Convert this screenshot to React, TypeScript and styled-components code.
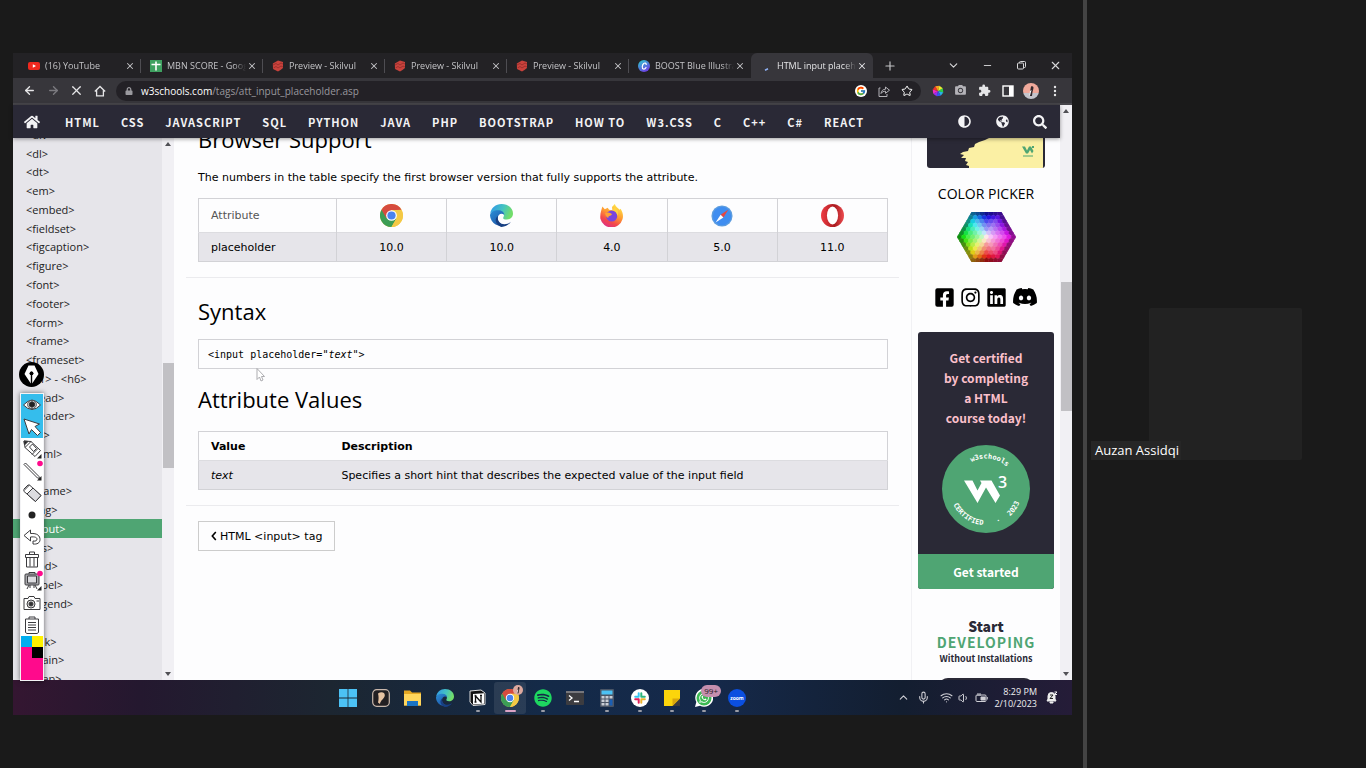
import React from "react";
import styled, { createGlobalStyle, css } from "styled-components";
import { FaHome, FaAdjust, FaGlobeAmericas, FaSearch, FaFacebookSquare, FaInstagram, FaLinkedin, FaDiscord, FaLock, FaSpotify, FaWhatsapp } from "react-icons/fa";
import { FcGoogle } from "react-icons/fc";
import { MdExtension, MdPhotoCamera } from "react-icons/md";
import { ArrowLeft, ArrowRight, X, Plus, ChevronDown, ChevronUp, Minus, Star, Mic, Wifi, Volume1 } from "lucide-react";

const ui = `"Open Sans", "Noto Sans", sans-serif`;
const source = `"Noto Sans CJK SC", "Noto Sans", sans-serif`;
const verdana = `"DejaVu Sans", sans-serif`;
const ink = "#2a2936";
const green = "#4fa573";
const mist = "#e6e5ea";

const GlobalStyle = createGlobalStyle`
  *, *::before, *::after { box-sizing: border-box; }
  body { margin: 0; background: #1a1a1a; font-family: ${ui}; overflow: hidden; }
  button { font: inherit; color: inherit; background: none; border: 0; padding: 0; cursor: pointer; }
  a { color: inherit; text-decoration: none; }
  h2, p, ul { margin: 0; padding: 0; font-weight: 400; }
  svg { display: block; flex: none; }
`;

/* ---------- meeting frame ---------- */
const Meeting = styled.div`display: flex; height: 100vh; background: #1a1a1a;`;
const Shared = styled.main`flex: 1; min-width: 0; display: flex; flex-direction: column; padding: 53px 11px 53px 13px;`;
const Splitter = styled.div`width: 4px; background: #444;`;
const Gallery = styled.aside`width: 279px; padding: 0 6px 0 4px; display: flex; align-items: center;`;
const Participant = styled.div`position: relative; flex: 1; display: flex; justify-content: center;`;
const Avatar = styled.div`width: 153px; height: 152px; background: #222; border-radius: 2px;`;
const NameTag = styled.span`
  position: absolute; left: 0; bottom: 0; padding: 0 2px 0 4px;
  font-size: 13px; line-height: 19px; color: #fff; background: #262626;
`;

/* ---------- browser chrome ---------- */
const TabStrip = styled.div`display: flex; height: 25px; padding-left: 6px; background: #232225; color: #c3c3c6;`;
const Tab = styled.div<{ $active?: boolean; $bare?: boolean }>`
  flex: 0 1 122px; min-width: 0; display: flex; align-items: center; gap: 5px; padding: 0 6px 0 9px;
  font-size: 9px; position: relative;
  ${p => p.$active ? css`background: #37363b; border-radius: 6px 6px 0 0; color: #e4e4e6;` : ""}
  ${p => !p.$active && !p.$bare ? css`&::after { content: ""; position: absolute; right: 0; top: 6px; height: 14px; width: 1px; background: #4e4d52; }` : ""}
`;
const TabTitle = styled.span`
  flex: 1; min-width: 0; margin-right: -4px; overflow: hidden; white-space: nowrap;
  mask-image: linear-gradient(90deg, #000 85%, transparent);
`;
const IconButton = styled.button<{ $w?: number; $dim?: boolean }>`
  width: ${p => p.$w ?? 23}px; flex: none; display: flex; align-items: center; justify-content: center;
  color: ${p => (p.$dim ? "#7c7b80" : "inherit")};
`;
const WindowButtons = styled.div`display: flex; margin-left: auto; color: #d8d8da;`;
const Toolbar = styled.div`
  display: flex; align-items: center; height: 27px; padding: 0 6px 0 5px;
  background: #37363b; border-bottom: 2px solid #47464b; color: #e6e6e8;
`;
const Omnibox = styled.label`
  flex: 1; min-width: 0; height: 20px; margin: 0 5px; padding: 0 3px 0 9px; border-radius: 10px;
  display: flex; align-items: center; background: #232126; font-size: 10px; color: #fff;
  > svg { margin-right: 8px; color: #9a999e; }
`;
const Address = styled.input`
  flex: 1; min-width: 0; border: 0; padding: 0; background: none; outline: 0;
  font: inherit; color: #99989d;
`;
const Profile = styled.span`
  width: 16px; height: 16px; border-radius: 50%; overflow: hidden;
  background: linear-gradient(#f0a99b 60%, #c4c4cc 60%);
`;

/* ---------- page ---------- */
const Page = styled.div`flex: 1; min-height: 0; display: flex; background: #fdfdfe;`;
const Site = styled.div`flex: 1; min-width: 0; display: flex; flex-direction: column;`;
const Nav = styled.nav`
  position: relative; height: 33px; display: flex; align-items: center; gap: 21px; padding: 0 13px 0 11px;
  background: ${ink}; color: #f3f3f5; box-shadow: 0 1px 4px rgba(0,0,0,.4);
  font-family: ${source}; font-size: 11px; line-height: 16px; font-weight: 700; letter-spacing: 1px; white-space: nowrap;
  a:first-child { margin-right: 4px; }
`;
const NavTools = styled.div`display: flex; gap: 24px; margin-left: auto;`;
const Body = styled.div`flex: 1; min-height: 0; display: flex; overflow: hidden;`;
const Sidebar = styled.aside`width: 149px; overflow: hidden; background: ${mist};`;
const TagList = styled.ul`height: calc(100% + 21px); margin-top: -13px; display: flex; flex-direction: column; list-style: none;`;
const TagItem = styled.li<{ $current?: boolean }>`
  flex: 1; display: flex; align-items: center; padding-left: 13px; font-size: 11px;
  color: ${p => (p.$current ? "#fff" : "#222")}; background: ${p => (p.$current ? green : "none")};
`;

const Track = styled.div`width: 12px; display: flex; flex-direction: column; align-items: center; background: #f1f0f4; padding: 4px 0;`;
const Space = styled.i<{ $grow: number }>`flex: ${p => p.$grow} 0 0;`;
const Thumb = styled.i<{ $grow: number }>`flex: ${p => p.$grow} 0 0; width: 11px; background: #c1c0c4;`;
const Tip = styled.i<{ $down?: boolean }>`
  border: 3px solid transparent; border-width: ${p => (p.$down ? "4px 3px 0" : "0 3px 4px")};
  ${p => (p.$down ? "border-top-color" : "border-bottom-color")}: #505055;
`;

const Article = styled.article`flex: 1; min-width: 0; padding: 0 12px; margin-top: -17px; font: 11px/17px ${verdana}; color: #000;`;
const Section = styled.section`padding: 0 11px 0 12px;`;
const Heading = styled.h2`font: 400 22px/36px ${ui};`;
const Intro = styled.p`padding: 12px 0;`;
const Rule = styled.hr`border: 0; height: 1px; margin: 15px 0; background: #ebebee;`;
const Grid = styled.table<{ $lined?: boolean }>`
  width: 100%; border-collapse: collapse; table-layout: fixed; border: 1px solid #d2d2d6; font: inherit;
  th, td { height: 29px; padding: 0 12px; text-align: left; }
  tbody tr { background: ${mist}; border-top: 1px solid #dcdce0; }
  ${p => p.$lined && css`
    th, td { border-right: 1px solid #d2d2d6; text-align: center; }
    th:first-child, td:first-child { width: 20%; text-align: left; font-weight: 400; }
    th:first-child { color: #555; }
    thead th { height: 34px; }
    svg { margin: 0 auto; }
  `}
`;
const ValueHead = styled.th`width: 19%;`;
const Code = styled.pre`
  margin: 10px 0 12px; height: 30px; padding: 0 9px; border: 1px solid #d2d2d6;
  font: 10px/29px "DejaVu Sans Mono", monospace;
`;
const Values = styled.div`margin-top: 14px;`;
const BackLink = styled.a`
  display: inline-flex; align-items: center; gap: 3px; height: 30px; padding: 0 12px; border: 1px solid #ccc; font-size: 11px;
`;

const Rail = styled.aside`width: 149px; padding: 0 6px; display: flex; flex-direction: column; align-items: center; border-left: 1px solid #f1f1f4;`;
const RailTitle = styled.h2`font-size: 14px; line-height: 20px; margin-top: 16px; color: #000;`;
const Picker = styled.a`margin-top: 8px;`;
const Social = styled.div`display: flex; gap: 5px; align-items: center; margin: 22px 0; color: #000;`;
const Certify = styled.section`
  align-self: stretch; flex: none; display: flex; flex-direction: column; align-items: center;
  border-radius: 3px; overflow: hidden; background: ${ink};
  font: 700 12px/20px ${source}; text-align: center; color: #fbc0cb;
  p { padding: 16px 0 17px; font-weight: 700; }
`;
const Start = styled.button`align-self: stretch; height: 35px; margin-top: 21px; background: ${green}; color: #fff;`;
const Spaces = styled.a`
  margin-top: 29px; display: flex; flex-direction: column; align-items: center; white-space: nowrap;
  font: 700 9px/15px ${source}; color: ${ink};
  b { font-size: 14px; line-height: 16px; }
  em { font-size: 14px; line-height: 17px; font-style: normal; letter-spacing: 1px; color: ${green}; }
`;
const Laptop = styled.i`flex: none; width: 96px; height: 20px; margin-top: 12px; border-radius: 10px; background: ${ink};`;

/* ---------- taskbar ---------- */
const Taskbar = styled.footer`
  position: relative; flex: none; height: 35px; display: flex; justify-content: center; align-items: center;
  background: linear-gradient(90deg, #341631 0, #24182f 12%, #1c2631 30%, #142a48 50%, #15294a 66%, #131e30 84%, #251c38 100%);
`;
const Apps = styled.div`display: flex; width: 421px; height: 32px;`;
const App32 = styled.button<{ $state?: "open" | "focus" }>`
  flex: 1; position: relative; display: flex; align-items: center; justify-content: center; border-radius: 3px;
  background: ${p => (p.$state === "focus" ? "rgba(255,255,255,.09)" : "none")};
  &::after {
    content: ""; position: absolute; bottom: 2px; height: 2px; border-radius: 1px;
    width: ${p => (p.$state === "focus" ? 11 : p.$state ? 4 : 0)}px;
    background: ${p => (p.$state === "focus" ? "#dba3c6" : "#9a9ca6")};
  }
`;
const Count = styled.span`
  position: absolute; left: 13px; top: 3px; padding: 0 3px; border-radius: 6px; background: #c58fae;
  color: #221722; font-size: 8px; line-height: 12px;
`;
const Face = styled.span`position: absolute; right: 3px; top: 3px; width: 10px; height: 10px; border-radius: 50%; background: #dda99f; overflow: hidden;`;
const Tray = styled.div`
  position: absolute; right: 14px; top: 0; height: 35px; display: flex; align-items: center; gap: 5px; color: #d0d0d6;
`;
const TrayGroup = styled.span`display: flex; gap: 7px; margin-right: 5px;`;
const Clock = styled.time`margin: 0 4px 0 1px; font-size: 9px; line-height: 12px; text-align: right; color: #f0f0f2;`;

/* ---------- annotation toolbox ---------- */
const Toolbox = styled.div`
  position: absolute; left: 20px; top: 393px; width: 24px; border: 1px solid #f4f4f6; background: #fff;
  box-shadow: 0 0 5px rgba(0,0,0,.55); display: flex; flex-direction: column;
`;
const Pen = styled.button`position: absolute; left: 19px; top: 362px;`;
const Tool = styled.button<{ $on?: boolean }>`
  height: 22px; position: relative; display: flex; align-items: center; justify-content: center;
  background: ${p => (p.$on ? "#35bdec" : "#fff")};
`;
const Swatches = styled.div`
  display: grid; grid-template-columns: 1fr 1fr; grid-auto-rows: 11px; height: 44px; background: #ff0a8c;
`;
const Swatch = styled.button<{ $c: string }>`background: ${p => p.$c};`;
const Pointer = styled.svg`position: absolute; left: 256px; top: 367px;`;

/* ---------- drawings ---------- */
const ChromeIcon = ({ s = 23 }: { s?: number }) => (
  <svg width={s} height={s} viewBox="0 0 24 24">
    <circle cx="12" cy="12" r="12" fill="#f4c945" />
    <path d="M12 12 1.6 6A12 12 0 0 0 12 24L17.2 15z" fill="#3c9d55" />
    <path d="M1.6 6A12 12 0 0 1 22.4 6L12 6.5 6.8 15z" fill="#d64b3f" />
    <path d="M22.4 6.2H12v5L17 15 12 24A12 12 0 0 0 22.4 6.2z" fill="#f4c945" />
    <circle cx="12" cy="12" r="5.6" fill="#fff" /><circle cx="12" cy="12" r="4.3" fill="#4a82ee" />
  </svg>
);
const EdgeIcon = ({ s = 23, id }: { s?: number; id: string }) => (
  <svg width={s} height={s} viewBox="0 0 24 24">
    <defs>
      <linearGradient id={id + "a"} x1="0" y1="0" x2="1" y2="0.3"><stop offset="0.2" stopColor="#36a4de" /><stop offset="0.6" stopColor="#45c4c0" /><stop offset="1" stopColor="#72dd6a" /></linearGradient>
      <linearGradient id={id + "b"} x1="0" y1="0" x2="0.8" y2="1"><stop offset="0" stopColor="#2b8fd8" /><stop offset="1" stopColor="#1c4fa0" /></linearGradient>
    </defs>
    <path d="M0.3 10C1 4 6 0 12 0c7 0 12 4.500 12 10 0 4-3 6.300-6.500 6.300-3 0-4.200-1.200-3.600-2.300C16 10 13 7.500 9 7.500 5 7.500 1.200 9 0.300 10z" fill={`url(#${id}a)`} />
    <path d="M0 12c0-3.600 4-5.600 8.500-5.600 3.500 0 6.400 2 6.400 5C12 8.500 8 11 8 15c0 4 4 7.500 9 7A12 12 0 0 1 0 12z" fill={`url(#${id}b)`} />
    <path d="M8.600 12.200C7 16 9.500 21 15 21c3 0 5.500-1.300 6.800-2.600C19.500 22 16 24 12 24 8 23 5.500 19 6 16c.3-1.800 1.300-3 2.600-3.800z" fill="#173f82" />
  </svg>
);
const FirefoxIcon = () => (
  <svg width="23" height="23" viewBox="0 0 24 24">
    <defs><linearGradient id="fx" x1="0.8" y1="0" x2="0.3" y2="1"><stop offset="0" stopColor="#fff04a" /><stop offset="0.45" stopColor="#ff9a32" /><stop offset="0.75" stopColor="#f4484a" /><stop offset="1" stopColor="#dc2f88" /></linearGradient></defs>
    <path d="M2.500 2.500 5 5.500 8 4l1.500 2L13 6.500 12.500 3 15.500 0c.5 3 3.500 4 5 6l1-1c2.500 4 3 7.500 2 11A12 12 0 0 1 .4 15.500C-.2 10 1.500 6 2.500 2.500z" fill="url(#fx)" />
    <circle cx="12.200" cy="12.500" r="5.800" fill="#7a45dc" /><path d="M5.500 9.500C9 8 12 9.500 12.500 11c-1.500 2-4 1-3.800 3.500C6.500 14 5.400 12 5.500 9.500z" fill="#ffa235" />
    <path d="M13 6.500c3 .5 5 3 5 6 3-5-1-8-3-9z" fill="#ffd342" />
  </svg>
);
const SafariIcon = () => (
  <svg width="22" height="22" viewBox="0 0 24 24"><circle cx="12" cy="12" r="11.500" fill="#5d9ddf" /><circle cx="12" cy="12" r="10" fill="#3f8df0" /><path d="M19 5 10.500 10.500l3 3z" fill="#e8473f" /><path d="M5 19l8.500-5.500-3-3z" fill="#fff" /></svg>
);
const OperaIcon = () => (
  <svg width="23" height="23" viewBox="0 0 24 24"><defs><linearGradient id="op"><stop offset="0" stopColor="#ef3b43" /><stop offset="0.6" stopColor="#a91c20" /><stop offset="1" stopColor="#ee4c50" /></linearGradient></defs>
    <circle cx="12" cy="12" r="12" fill="url(#op)" /><ellipse cx="12" cy="12" rx="5.800" ry="9.300" fill="#fff" /></svg>
);
const YouTube = () => <svg width="12" height="12" viewBox="0 0 12 12"><rect y="2" width="12" height="8" rx="2" fill="#f0281e" /><path d="M4.800 4.200v3.600L8 6z" fill="#fff" /></svg>;
const Sheets = () => <svg width="12" height="12" viewBox="0 0 12 12"><rect width="12" height="12" fill="#3fa161" /><path d="M6 1.500v9M1.500 4.500h9" stroke="#fff" strokeWidth="1.600" /></svg>;
const Skilvul = () => <svg width="12" height="12" viewBox="0 0 12 12"><path d="M6 .5 11 2v6l-2.500 2L6 11.500 1 9 .8 3.500z" fill="#c8423c" /><path d="M1 5l3-1.500L6 5l3-2 2 1M1.500 8 4 6.500 6 8l3-2 2 1" stroke="#7e2422" fill="none" strokeWidth=".6" /></svg>;
const Canva = () => (
  <svg width="12" height="12" viewBox="0 0 12 12"><defs><linearGradient id="cv" x1="0" y1="0" x2=".6" y2="1"><stop offset=".1" stopColor="#2fc3cf" /><stop offset="1" stopColor="#6d3fe4" /></linearGradient></defs>
    <circle cx="6" cy="6" r="6" fill="url(#cv)" /><path d="M8.200 4.500C8.300 3 6.800 2.600 5.700 3.500 4 5 3.700 8.600 5.400 9c1 .2 2-.4 2.600-1.500" fill="none" stroke="#fff" strokeWidth="1.200" strokeLinecap="round" /></svg>
);
const Spinner = () => <svg width="12" height="12" viewBox="0 0 12 12"><path d="M5 10.200 8 8.800" stroke="#8fb1f5" strokeWidth="1.500" /></svg>;
const House = () => <svg width="12" height="12" viewBox="0 0 12 12" fill="none" stroke="currentColor" strokeWidth="1.300"><path d="M.8 6.500 6 1.500l5.200 5M2.600 5v5.800h6.800V5" /></svg>;
const Share = () => <svg width="12" height="12" viewBox="0 0 12 12" fill="none" stroke="#b4b3b8"><path d="M2.500 3H1v8.500h8V9M3 8.500C3.500 5.500 5 4.300 7.500 4.200V2L11.500 5.200 7.500 8.300V6.200C5.500 6.200 4 7 3 8.500z" /></svg>;
const Wheel = () => (
  <svg width="12" height="12" viewBox="-6 -6 12 12">
    {["#2ad04a", "#27b5e8", "#3158f0", "#9a2df0", "#f02cc0", "#f0322c", "#f7a020", "#e8ee30"].map((c, i) => (
      <path key={c} d="M0 0 0-5.500 3.900-3.900z" fill={c} transform={`rotate(${i * 45 + 60})`} />
    ))}
  </svg>
);
const SidePanel = () => <svg width="12" height="12" viewBox="0 0 12 12"><rect x="1" y="1" width="10" height="10" fill="none" stroke="#fff" strokeWidth="1.400" /><rect x="7" y="1" width="4" height="10" fill="#fff" /></svg>;
const Dots = () => <svg width="4" height="12" viewBox="0 0 4 12" fill="#e8e8ea"><circle cx="2" cy="2" r="1.200" /><circle cx="2" cy="6" r="1.200" /><circle cx="2" cy="10" r="1.200" /></svg>;
const Restore = () => <svg width="9" height="9" viewBox="0 0 9 9" fill="none" stroke="currentColor"><rect x=".5" y="2" width="6" height="6" rx="1" /><path d="M2.500 2V1.500a1 1 0 0 1 1-1H7.500a1 1 0 0 1 1 1V5.500a1 1 0 0 1-1 1H6.500" /></svg>;
const Person = ({ s }: { s: number }) => <svg width={s} height={s} viewBox="0 0 16 16"><path d="M8 3.500c2-1 3 .5 2.300 2.500L9.500 9 9 13H6.500L7 9z" fill="#33282c" /><path d="M8.500 7 7 12.500l-1 .5L7 8z" fill="#fff" /></svg>;

const Hexagon = () => {
  const cells: React.ReactNode[] = [];
  for (let r = -7; r <= 7; r++) {
    const n = 15 - Math.abs(r);
    for (let i = 0; i < n; i++) {
      const x = (i - (n - 1) / 2) * 4.5;
      const y = r * 3.9;
      const a = ((Math.atan2(x, -y) * 180) / Math.PI + 360) % 360;
      const hue = a < 180 ? 240 + (a * 2) / 3 : ((a - 180) * 4) / 3;
      const d = Math.max(Math.abs(r), Math.abs(x / 4.5) + Math.abs(r) / 2) / 6;
      const light = d < 0.75 ? 95 - (d / 0.75) * 38 : Math.max(30, 57 - ((d - 0.75) / 0.25) * 26);
      const fill = `hsl(${hue} 82% ${light}%)`;
      cells.push(<path key={`${r}.${i}`} transform={`translate(${x} ${y})`} d="M0-2.600 2.250-1.300V1.300L0 2.600-2.250 1.300V-1.300z" fill={fill} stroke={fill} strokeWidth=".5" />);
    }
  }
  return (
    <svg width="59" height="50" viewBox="-29.500 -25 59 50">
      <defs><clipPath id="hx"><path d="M-29.500 0-15-25H15L29.500 0 15 25H-15z" /></clipPath></defs>
      <g clipPath="url(#hx)">{cells}</g>
    </svg>
  );
};

const Banner = () => (
  <svg width="118" height="30" viewBox="0 0 118 30">
    <defs><clipPath id="bn"><path d="M0 0h118v27a3 3 0 0 1-3 3H3a3 3 0 0 1-3-3z" /></clipPath></defs>
    <g clipPath="url(#bn)">
      <rect width="118" height="30" fill={ink} />
      <path d="M62 0 58 2l-6 2-4 2-1 3-5 1-1 3-5 1-3 2 4 1-3 3 5 0-1 3 3 1-2 3 3 1 0 2h74V0z" fill="#fbf0a4" />
      <path d="M95 8.500h3l2 4 2-4h2l2.500 4.500-1.500 2.500-2-3.500-2 3.500-2 0z" fill={green} /><path d="M105 8h2v2h-2zM96 17.500h10v1H96z" fill={green} />
    </g>
  </svg>
);

const Badge = () => (
  <svg width="88" height="88" viewBox="0 0 88 88">
    <defs>
      <path id="arcTop" d="M13.500 44a30.500 30.500 0 0 1 61 0" />
      <path id="arcLow" d="M7.800 44a36.200 36.200 0 0 0 72.400 0" />
    </defs>
    <circle cx="44" cy="44" r="44" fill={green} />
    <g fill="#fff" fontFamily="DejaVu Sans Mono, monospace" fontSize="7">
      <text textAnchor="middle"><textPath href="#arcTop" startOffset="54%">w3schools</textPath></text>
      <text><textPath href="#arcLow" startOffset="14%">CERTIFIED</textPath></text>
      <text><textPath href="#arcLow" startOffset="60%">·</textPath></text>
      <text><textPath href="#arcLow" startOffset="73%">2023</textPath></text>
    </g>
    <path d="M22 35.500h8.500l5 10 4-7.500 -1.500-2.500h11.500l8.500 15-4.500 7.500-9.500-15.500-8.500 15.500z" fill="#fff" />
    <text x="56" y="43" fill="#fff" fontFamily="Open Sans, sans-serif" fontSize="16" fontWeight="600">3</text>
  </svg>
);

const mark = { fill: "none", stroke: "#3b3b3e", strokeWidth: 1, strokeLinejoin: "round" as const };
const T = ({ children }: { children: React.ReactNode }) => <svg width="22" height="22" viewBox="0 0 22 22" {...mark}>{children}</svg>;
const corner = <path d="M20.500 16v4.500H16z" fill="#222" stroke="none" />;
const pink = <circle cx="19" cy="3.500" r="2.800" fill="#ff0a8c" stroke="none" />;
const tools: [string, React.ReactNode, boolean?][] = [
  ["Show", <T><path d="M2.500 11Q11 1.500 19.500 11 11 20 2.500 11z" fill="#fff" /><circle cx="11" cy="10.500" r="4.300" fill="#fff" /><circle cx="11" cy="10.500" r="2.800" fill="#222" /></T>, true],
  ["Pointer", <T><path d="M3 3l15.500 5-4.500 2.500 5.500 6-3 3-6-6L8 18z" fill="#fff" /></T>, true],
  ["Pencil", <T><path d="M3 3l7 .5 9.500 9-5.500 6L4 9.500zM10 3.500 4 9.500" /><path d="M8.500 9 11.500 6l4 4.500-3 3zM17 10.500l-6 6" /><path d="M3 3l4 .5L3.500 7z" fill="#222" />{corner}</T>],
  ["Line", <T><path d="M3 4.500 4.500 3 18 16.500l.5 2-2-.5z" />{pink}{corner}</T>],
  ["Eraser", <T><path d="M2.500 9 8.500 3 20 13.500l-5.500 6z" fill="#fff" /><path d="M6 12 12 6 20 13.500l-5.500 6z" fill="#dcdce0" /><path d="M2.500 7.500 7 3l1.500 0" /></T>],
  ["Size", <T><circle cx="11" cy="11" r="3.500" fill="#222" stroke="none" /></T>],
  ["Undo", <T><path d="M3 9.500 9.500 4v3.500c7-.5 9.500 2.500 9.500 6s-3 5-7 4.500v-3c3 .5 4-.5 4-2s-2-2.500-6.500-2V15z" /></T>],
  ["Clear", <T><path d="M4.500 6.500h13v3h-13zM8.500 6.500V4h5v2.500M5.500 9.500v9.500h11v-9.500M9 9.500v9M13 9.500v9" /></T>],
  ["Board", <T><rect x="4" y="4" width="14" height="11" rx="1" fill="#a9a9ad" /><path d="M8 4V2.500h6V4M8 15l-2 4M14 15l2 4M9 15v3M13 15v3" /><rect x="6.500" y="6" width="9" height="7" fill="#dcdce0" />{pink}{corner}</T>],
  ["Camera", <T><path d="M3 6.500h4L8 4.500h5l1 2h5v11H3zM15.500 9h2.500" /><circle cx="10" cy="12" r="4" fill="#ddd" /><circle cx="10" cy="12" r="2" fill="#333" /></T>],
  ["Notes", <T><path d="M4.500 5h13v13.500l-1.500 1h-10l-1.500-1zM8 5V3h6v2M7 8.500h8M7 11h8M7 13.500h8M7 16h8" /></T>],
];

const tags = "div dl dt em embed fieldset figcaption figure font footer form frame frameset h1 head header hr html i iframe img input ins kbd label legend li link main map".split(" ");
const sections = ["HTML", "CSS", "JAVASCRIPT", "SQL", "PYTHON", "JAVA", "PHP", "BOOTSTRAP", "HOW TO", "W3.CSS", "C", "C++", "C#", "REACT"];
const tabs: [string, React.ReactNode][] = [
  ["(16) YouTube", <YouTube />], ["MBN SCORE - Google Sheets", <Sheets />], ["Preview - Skilvul", <Skilvul />],
  ["Preview - Skilvul", <Skilvul />], ["Preview - Skilvul", <Skilvul />], ["BOOST Blue Illustrative", <Canva />],
  ["HTML input placeholder", <Spinner />],
];

const apps: [string, React.ReactNode, ("open" | "focus")?][] = [
  ["Start", <svg width="18" height="18" viewBox="0 0 18 18" fill="#4cc2f5"><path d="M0 0h8.600v8.600H0zM9.400 0H18v8.600H9.400zM0 9.400h8.600V18H0zM9.400 9.400H18V18H9.400z" /></svg>],
  ["Procreate", <svg width="18" height="18" viewBox="0 0 18 18"><rect x=".7" y=".7" width="16.600" height="16.600" rx="4" fill="#221f22" stroke="#c9b8ac" strokeWidth="1.200" /><path d="M6 4.500C9 2.500 13 3 12.800 6.500 12.600 9.500 8.500 11 8 15L6 13.500c.8-3 .8-6 0-9z" fill="#e6c3a2" /></svg>],
  ["Files", <svg width="19" height="18" viewBox="0 0 19 18"><path d="M1 1.500h6l2 2h9v13H1z" fill="#e5a823" /><path d="M1 5h17v11.500H1z" fill="#ffd65c" /><path d="M4 12h11v5H4z" fill="#1b74c4" /></svg>],
  ["Edge", <EdgeIcon s={18} id="te" />],
  ["Notion", <svg width="17" height="17" viewBox="0 0 17 17"><path d="M1 2l11-1 4 3v11.500L4 16.500 1 13z" fill="#111" stroke="#ddd" /><path d="M4 5l11-.8v10.500L4 15.500z" fill="#fff" /><path d="M6.500 13V7l5.500 6V6.500M5.500 6.800h2M11 6.400h2M5.500 13h2" stroke="#111" strokeWidth="1.300" fill="none" /></svg>, "open"],
  ["Chrome", <><ChromeIcon s={18} /><Face><Person s={10} /></Face></>, "focus"],
  ["Spotify", <FaSpotify size={18} color="#1ed760" />, "open"],
  ["Terminal", <svg width="18" height="14" viewBox="0 0 18 14"><rect width="18" height="14" rx="1" fill="#3c3c40" /><path d="M0 0h18v2H0z" fill="#77777c" /><path d="M3 4.500 6 7 3 9.500M8 10.500h5" fill="none" stroke="#fff" strokeWidth="1.300" /></svg>],
  ["Calculator", <svg width="14" height="18" viewBox="0 0 14 18"><rect width="14" height="18" rx="1" fill="#4a5566" /><path d="M1.500 1.500h11v4h-11z" fill="#4cc2f5" /><g fill="#c9ced6"><path d="M1.500 7h3v2.500h-3zM5.500 7h3v2.500h-3zM9.500 7h3v2.500h-3zM1.500 10.500h3V13h-3zM5.500 10.500h3V13h-3zM1.500 14h3v2.500h-3zM5.500 14h3v2.500h-3z" /></g><path d="M9.500 10.500h3v6h-3z" fill="#1b5fb4" /></svg>, "open"],
  ["Slack", <svg width="18" height="18" viewBox="0 0 18 18"><circle cx="9" cy="9" r="9" fill="#fff" /><g strokeWidth="2" strokeLinecap="round" fill="none"><path d="M7.700 4.200v3M4.200 7.700h3.500" stroke="#36c5f0" /><path d="M10.300 4.200v3.500M10.800 7.700h3" stroke="#2eb67d" /><path d="M10.300 10.300h3.500M10.300 11v2.800" stroke="#ecb22e" /><path d="M7.700 10.300v3.500M4.200 10.300h3" stroke="#e01e5a" /></g></svg>, "open"],
  ["Sticky Notes", <svg width="16" height="16" viewBox="0 0 16 16"><path d="M0 0h16v9l-7 7H0z" fill="#fcd50b" /><path d="M16 8.500V16H8.500z" fill="#3a3a3e" /><path d="M8.500 16V8.500H16z" fill="#d9a70c" /></svg>, "open"],
  ["WhatsApp", <><svg width="18" height="18" viewBox="0 0 18 18"><path d="M0 18 1.300 13A9 9 0 1 1 5 16.700z" fill="#fff" /><circle cx="9" cy="9" r="7.500" fill="#3cb953" /><FaWhatsapp x="3.500" y="3.500" size={11} color="#fff" /></svg><Count>99+</Count></>, "open"],
  ["Zoom", <svg width="18" height="18" viewBox="0 0 18 18"><circle cx="9" cy="9" r="9" fill="#0b4fe0" /><text x="9" y="11" textAnchor="middle" fontSize="5" fontWeight="700" fill="#fff" fontFamily="Open Sans, sans-serif">zoom</text></svg>, "open"],
];

const Scrollbar = ({ parts }: { parts: [number, number, number] }) => (
  <Track><Tip /><Space $grow={parts[0]} /><Thumb $grow={parts[1]} /><Space $grow={parts[2]} /><Tip $down /></Track>
);

export default function App() {
  return (
    <Meeting>
      <GlobalStyle />
      <Shared>
        <TabStrip>
          {tabs.map(([title, icon], i) => (
            <Tab key={i} $active={i === 6} $bare={i === 5}>
              {icon}<TabTitle>{title}</TabTitle>
              <IconButton $w={10} aria-label="Close tab"><X size={10} strokeWidth={2.5} /></IconButton>
            </Tab>
          ))}
          <IconButton $w={34} aria-label="New tab"><Plus size={14} /></IconButton>
          <WindowButtons>
            <IconButton $w={34} aria-label="Search tabs"><ChevronDown size={13} /></IconButton>
            <IconButton $w={34} aria-label="Minimize"><Minus size={11} /></IconButton>
            <IconButton $w={34} aria-label="Restore"><Restore /></IconButton>
            <IconButton $w={34} aria-label="Close"><X size={13} /></IconButton>
          </WindowButtons>
        </TabStrip>
        <Toolbar>
          <IconButton aria-label="Back"><ArrowLeft size={13} strokeWidth={2.5} /></IconButton>
          <IconButton $w={24} $dim aria-label="Forward"><ArrowRight size={13} strokeWidth={2.5} /></IconButton>
          <IconButton aria-label="Stop"><X size={15} /></IconButton>
          <IconButton aria-label="Home"><House /></IconButton>
          <Omnibox>
            <FaLock size={8} />
            <span>w3schools.com</span>
            <Address aria-label="Address" defaultValue="/tags/att_input_placeholder.asp" />
            <IconButton as="span"><svg width="12" height="12" viewBox="0 0 12 12"><circle cx="6" cy="6" r="6" fill="#fff" /><FcGoogle x="1" y="1" size={10} /></svg></IconButton>
            <IconButton as="span"><Share /></IconButton>
            <IconButton as="span"><Star size={12} /></IconButton>
          </Omnibox>
          <IconButton aria-label="Color extension"><Wheel /></IconButton>
          <IconButton aria-label="Screenshot extension"><MdPhotoCamera size={13} color="#b4b3b8" /></IconButton>
          <IconButton $w={24} aria-label="Extensions"><MdExtension size={13} /></IconButton>
          <IconButton aria-label="Side panel"><SidePanel /></IconButton>
          <IconButton $w={24} aria-label="Profile"><Profile><Person s={16} /></Profile></IconButton>
          <IconButton aria-label="Menu"><Dots /></IconButton>
        </Toolbar>
        <Page>
          <Site>
            <Nav>
              <a href="#home" aria-label="Home"><FaHome size={16} /></a>
              {sections.map(s => <a href="#section" key={s}>{s}</a>)}
              <NavTools>
                <IconButton $w={14} aria-label="Theme"><FaAdjust size={13} /></IconButton>
                <IconButton $w={14} aria-label="Language"><FaGlobeAmericas size={13} /></IconButton>
                <IconButton $w={14} aria-label="Search"><FaSearch size={14} /></IconButton>
              </NavTools>
            </Nav>
            <Body>
              <Sidebar>
                <TagList>
                  {tags.map(t => <TagItem key={t} $current={t === "input"}><a href="#tag">{t === "h1" ? "<h1> - <h6>" : `<${t}>`}</a></TagItem>)}
                </TagList>
              </Sidebar>
              <Scrollbar parts={[215, 104, 202]} />
              <Article>
                <Section>
                  <Heading>Browser Support</Heading>
                  <Intro>The numbers in the table specify the first browser version that fully supports the attribute.</Intro>
                  <Grid $lined>
                    <thead><tr>
                      <th>Attribute</th><th><ChromeIcon /></th><th><EdgeIcon id="pe" /></th><th><FirefoxIcon /></th><th><SafariIcon /></th><th><OperaIcon /></th>
                    </tr></thead>
                    <tbody><tr><td>placeholder</td><td>10.0</td><td>10.0</td><td>4.0</td><td>5.0</td><td>11.0</td></tr></tbody>
                  </Grid>
                </Section>
                <Rule />
                <Section>
                  <Heading>Syntax</Heading>
                  <Code>&lt;input placeholder="<i>text</i>"&gt;</Code>
                  <Heading>Attribute Values</Heading>
                  <Values>
                    <Grid>
                      <thead><tr><ValueHead>Value</ValueHead><th>Description</th></tr></thead>
                      <tbody><tr><td><i>text</i></td><td>Specifies a short hint that describes the expected value of the input field</td></tr></tbody>
                    </Grid>
                  </Values>
                </Section>
                <Rule />
                <Section>
                  <BackLink href="#input">
                    <svg width="6" height="10" viewBox="0 0 6 10" fill="none" stroke="#000" strokeWidth="1.600"><path d="M4.800 1 1.300 5l3.500 4" /></svg>
                    HTML &lt;input&gt; tag
                  </BackLink>
                </Section>
              </Article>
              <Rail>
                <a href="#game" aria-label="Code game"><Banner /></a>
                <RailTitle>COLOR PICKER</RailTitle>
                <Picker href="#picker" aria-label="Color picker"><Hexagon /></Picker>
                <Social>
                  <a href="#fb" aria-label="Facebook"><FaFacebookSquare size={21} /></a>
                  <a href="#ig" aria-label="Instagram"><FaInstagram size={21} /></a>
                  <a href="#li" aria-label="LinkedIn"><FaLinkedin size={21} /></a>
                  <a href="#dc" aria-label="Discord"><FaDiscord size={26} /></a>
                </Social>
                <Certify>
                  <p>Get certified<br />by completing<br />a HTML<br />course today!</p>
                  <Badge />
                  <Start>Get started</Start>
                </Certify>
                <Spaces href="#spaces"><b>Start</b><em>DEVELOPING</em>Without Installations</Spaces>
                <Laptop />
              </Rail>
            </Body>
          </Site>
          <Scrollbar parts={[169, 129, 261]} />
        </Page>
        <Taskbar>
          <Apps>{apps.map(([name, icon, state]) => <App32 key={name} aria-label={name} $state={state}>{icon}</App32>)}</Apps>
          <Tray>
            <TrayGroup><ChevronUp size={13} /><Mic size={13} /></TrayGroup>
            <Wifi size={13} /><Volume1 size={12} />
            <svg width="13" height="11" viewBox="0 0 13 11" fill="none" stroke="currentColor"><rect x="1" y="3" width="10" height="6.500" rx="1" /><path d="M12.300 5v2.500" /><path d="M6 5h4v3H6zM3 1v3M5 1v3" fill="currentColor" /></svg>
            <Clock>8:29 PM<br />2/10/2023</Clock>
            <svg width="12" height="13" viewBox="0 0 12 13" fill="none"><path d="M1 10 2 8V5a3.500 3.500 0 0 1 7 0v3l1 2zM4 11h3v1H4z" fill="#eee" stroke="#eee" /><path d="M4 4h3L4 7.500h3" stroke="#222" /><path d="M8.500 1H11L8.500 3.500H11" stroke="#eee" /></svg>
          </Tray>
        </Taskbar>
      </Shared>
      <Splitter />
      <Gallery><Participant><Avatar /><NameTag>Auzan Assidqi</NameTag></Participant></Gallery>
      <Toolbox>
        {tools.map(([name, icon, on]) => <Tool key={name} aria-label={name} $on={on}>{icon}</Tool>)}
        <Swatches>
          <Swatch $c="#00aeef" aria-label="Cyan" /><Swatch $c="#fff200" aria-label="Yellow" />
          <Swatch $c="#ff0a8c" aria-label="Pink" /><Swatch $c="#000" aria-label="Black" />
        </Swatches>
      </Toolbox>
      <Pen aria-label="Toggle toolbox">
        <svg width="25" height="25" viewBox="0 0 25 25"><circle cx="12.500" cy="12.500" r="12.500" fill="#000" /><path d="M9.500 3.500h6l4 8.500-6.300 9.500V13a1.700 1.700 0 1 0-1.400 0v8.500L5.500 12z" fill="#fff" /><circle cx="12.500" cy="11.300" r="1.900" fill="#000" /></svg>
      </Pen>
      <Pointer width="10" height="16" viewBox="0 0 10 16"><path d="M1 1.500v11l2.500-2.500L5 14l2-1-1.500-3.500H8.500z" fill="#fff" stroke="#a4a4a8" strokeWidth=".9" /></Pointer>
    </Meeting>
  );
}
